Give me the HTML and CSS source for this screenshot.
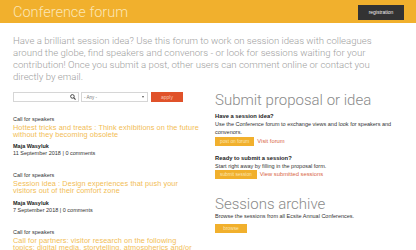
FILE: index.html
```html
<!DOCTYPE html>
<html>
<head>
    <link rel="stylesheet" href="styles.css">
</head>
<body>
    <header>
        <span class="title">Conference forum</span>
        <button class="register">registration</button>
    </header>

    <main>
        <p class="intro">
            Have a brilliant session idea? Use this forum to work on session ideas with colleagues
            around the globe, find speakers and convenors - or look for sessions waiting for your
            contribution! Once you submit a post, other users can comment online or contact you
            directly by email.
        </p>

        <div class="columns">
            <!-- Forum posts -->
            <section class="posts">
                <div class="filters">
                    <div class="search">
                        <svg width="6" height="6" viewBox="0 0 10 10">
                            <circle cx="4" cy="4" r="3" fill="none" stroke="#444" stroke-width="1.6"/>
                            <line x1="6.2" y1="6.2" x2="9.2" y2="9.2" stroke="#444" stroke-width="1.8"/>
                        </svg>
                    </div>
                    <div class="select">
                        <span>- Any -</span>
                        <span class="arrow"></span>
                    </div>
                    <button class="apply">apply</button>
                </div>

                <div class="post">
                    <div class="category">Call for speakers</div>
                    <a class="post-title">Hottest tricks and treats : Think exhibitions on the future without they becoming obsolete</a>
                    <div class="author">Maja Wasyluk</div>
                    <div class="meta">11 September 2018 | 0 comments</div>
                </div>

                <div class="post">
                    <div class="category">Call for speakers</div>
                    <a class="post-title">Session idea : Design experiences that push your visitors out of their comfort zone</a>
                    <div class="author">Maja Wasyluk</div>
                    <div class="meta">7 September 2018 | 0 comments</div>
                </div>

                <div class="post">
                    <div class="category">Call for speakers</div>
                    <a class="post-title">Call for partners: visitor research on the following topics: digital media, storytelling, atmospherics and/or</a>
                </div>
            </section>

            <!-- Sidebar -->
            <aside class="sidebar">
                <h2>Submit proposal or idea</h2>
                <h4>Have a session idea?</h4>
                <p>Use the Conference forum to exchange views and look for speakers and convenors.</p>
                <div class="actions">
                    <button class="button">post on forum</button>
                    <a class="link">Visit forum</a>
                </div>

                <h4 class="spaced">Ready to submit a session?</h4>
                <p>Start right away by filling in the proposal form.</p>
                <div class="actions">
                    <button class="button">submit session</button>
                    <a class="link">View submitted sessions</a>
                </div>

                <h2 class="archive">Sessions archive</h2>
                <p>Browse the sessions from all Ecsite Annual Conferences.</p>
                <div class="actions">
                    <button class="button wide">browse</button>
                </div>
            </aside>
        </div>
    </main>
</body>
</html>
```

FILE: styles.css
```css
body {
    margin: 0;
    padding: 0;
    font-family: Roboto, 'Liberation Sans', sans-serif;
    background-color: white;
    overflow: hidden;
}

header {
    height: 23px;
    background-color: #f1b02d;
    display: flex;
    justify-content: space-between;
    align-items: center;
    padding: 0 12px 0 13px;
}

.title {
    color: #fbe6b6;
    font-size: 14.5px;
    font-weight: 300;
    margin-top: 1px;
}

.register {
    all: unset;
    width: 46px;
    height: 15px;
    margin-top: 1px;
    background-color: #333333;
    color: #eee;
    font-family: 'Liberation Sans', sans-serif;
    font-size: 5px;
    text-align: center;
    line-height: 15px;
}

main {
    padding: 0 13px;
}

.intro {
    max-width: 372px;
    margin: 12px 0 0;
    color: #a0a0a0;
    font-size: 9.6px;
    font-weight: 300;
    line-height: 12px;
}

.columns {
    display: grid;
    grid-template-columns: 186px 1fr;
    gap: 16px;
    margin-top: 9px;
}

.filters {
    display: flex;
    gap: 2px;
    height: 10px;
}

.search {
    width: 62px;
    border: 1px solid #d6d6d6;
    display: flex;
    justify-content: flex-end;
    align-items: center;
    padding-right: 2px;
}

.select {
    width: 60px;
    border: 1px solid #d6d6d6;
    display: flex;
    justify-content: space-between;
    align-items: center;
    padding: 0 3px 0 2px;
    font-family: 'Liberation Sans', sans-serif;
    font-size: 4.5px;
    color: #777;
}

.arrow {
    width: 0;
    height: 0;
    border-left: 1.5px solid transparent;
    border-right: 1.5px solid transparent;
    border-top: 2.5px solid #555;
}

.apply {
    all: unset;
    width: 32px;
    margin-left: 1px;
    background-color: #e0522a;
    color: #f7c7b4;
    font-family: 'Liberation Sans', sans-serif;
    font-size: 5px;
    text-align: center;
    line-height: 10px;
}

.post {
    margin-top: 13px;
    font-family: 'Liberation Sans', sans-serif;
}

.post + .post {
    margin-top: 14px;
}

.category {
    color: #333;
    font-size: 5.5px;
    line-height: 8px;
}

.post-title {
    display: block;
    margin-top: 2px;
    color: #f2bd55;
    font-size: 7.3px;
    line-height: 6.7px;
    letter-spacing: 0.1px;
}

.author {
    margin-top: 4px;
    color: #222;
    font-size: 5.5px;
    font-weight: bold;
    line-height: 8px;
}

.meta {
    color: #333;
    font-size: 5.5px;
    line-height: 7px;
}

.sidebar {
    font-family: 'Liberation Sans', sans-serif;
}

.sidebar h2 {
    margin: 0;
    font-family: Roboto, sans-serif;
    font-weight: 300;
    font-size: 15px;
    line-height: 16px;
    color: #8a8a8a;
}

.sidebar h2.archive {
    margin-top: 17px;
}

.sidebar h4 {
    margin: 4px 0 0;
    font-size: 5.8px;
    line-height: 8px;
    color: #222;
}

.sidebar h4.spaced {
    margin-top: 8px;
}

.sidebar p {
    margin: 0;
    font-size: 5.5px;
    line-height: 8.3px;
    color: #333;
}

.actions {
    display: flex;
    align-items: center;
    gap: 3px;
}

.button {
    all: unset;
    padding: 0 5px;
    height: 9px;
    line-height: 9px;
    background-color: #f1b02d;
    color: #fbe6b6;
    font-family: 'Liberation Sans', sans-serif;
    font-size: 4.8px;
}

.button.wide {
    width: 22px;
    text-align: center;
    margin-top: 4px;
}

.link {
    color: #d8643f;
    font-size: 5.8px;
}
```
